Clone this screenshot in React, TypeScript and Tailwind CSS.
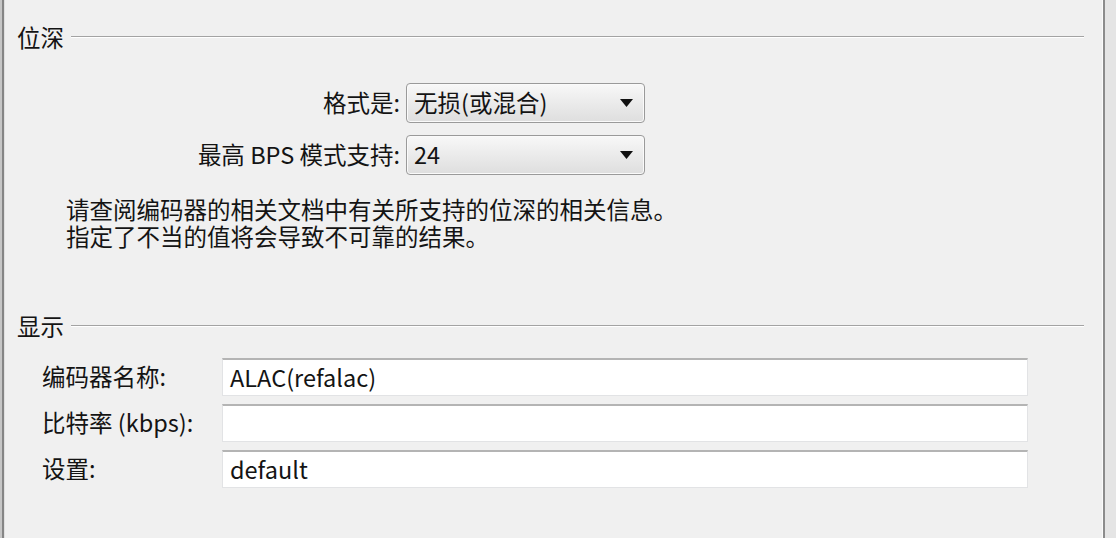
import React from 'react';

const font = 'font-["Noto_Sans_CJK_SC","Noto_Sans",sans-serif]';

function GroupHeader({ title }: { title: string }) {
  return (
    <div className="flex h-[24px] items-center">
      <span className="leading-[24px]">{title}</span>
      <div className="ml-[7px] h-[2px] flex-1 border-t border-b border-t-[#a3a3a3] border-b-white" />
    </div>
  );
}

function Combo({ value }: { value: string }) {
  return (
    <div className="flex h-[40px] w-[239px] items-center justify-between rounded-[4px] border border-[#9a9a9a] bg-linear-to-b from-[#f8f8f8] to-[#dedede] pl-[7px] pr-[11px] shadow-[inset_0_0_0_1px_#fafafa]">
      <span className="leading-none">{value}</span>
      <svg width="13" height="8" viewBox="0 0 13 8">
        <path d="M0 0 H13 L6.5 8 Z" fill="#111" />
      </svg>
    </div>
  );
}

function Field({ label, value }: { label: string; value: string }) {
  return (
    <div className="flex h-[38px] items-center pl-[25px]">
      <span className="w-[180px] leading-none">{label}</span>
      <div className="flex h-[38px] w-[806px] items-center border border-[#e2e3e5] border-t-2 border-t-[#b4b4b4] bg-white pl-[7px]">
        <span className="leading-none">{value}</span>
      </div>
    </div>
  );
}

export default function App() {
  return (
    <div className={`flex h-[538px] w-[1116px] bg-[#f0f0f0] text-[23.5px] text-[#141414] ${font}`}>
      <div className="w-[2px] bg-[#c6c6c6]" />
      <div className="w-[2px] bg-[#858585]" />
      <div className="w-[1px] bg-[#e0e0e0]" />

      <div className="flex flex-1 flex-col pl-[12px] pr-[18px] pt-[25px]">
        <GroupHeader title="位深" />

        <div className="mt-[34px] flex flex-col gap-[12px]">
          <div className="flex items-center">
            <span className="w-[383px] text-right leading-none">格式是:</span>
            <div className="ml-[6px]">
              <Combo value="无损(或混合)" />
            </div>
          </div>
          <div className="flex items-center">
            <span className="w-[383px] text-right leading-none">最高 BPS 模式支持:</span>
            <div className="ml-[6px]">
              <Combo value="24" />
            </div>
          </div>
        </div>

        <div className="mt-[21px] pl-[49px] leading-[27px]">
          <p>请查阅编码器的相关文档中有关所支持的位深的相关信息。</p>
          <p>指定了不当的值将会导致不可靠的结果。</p>
        </div>

        <div className="mt-[64px]">
          <GroupHeader title="显示" />
        </div>

        <div className="mt-[20px] flex flex-col gap-[8px]">
          <Field label="编码器名称:" value="ALAC(refalac)" />
          <Field label="比特率 (kbps):" value="" />
          <Field label="设置:" value="default" />
        </div>
      </div>

      <div className="w-[1px] bg-[#fbfbfb]" />
      <div className="w-[2px] bg-[#8c8c8c]" />
      <div className="w-[11px] bg-[#e5e5e5]" />
    </div>
  );
}
